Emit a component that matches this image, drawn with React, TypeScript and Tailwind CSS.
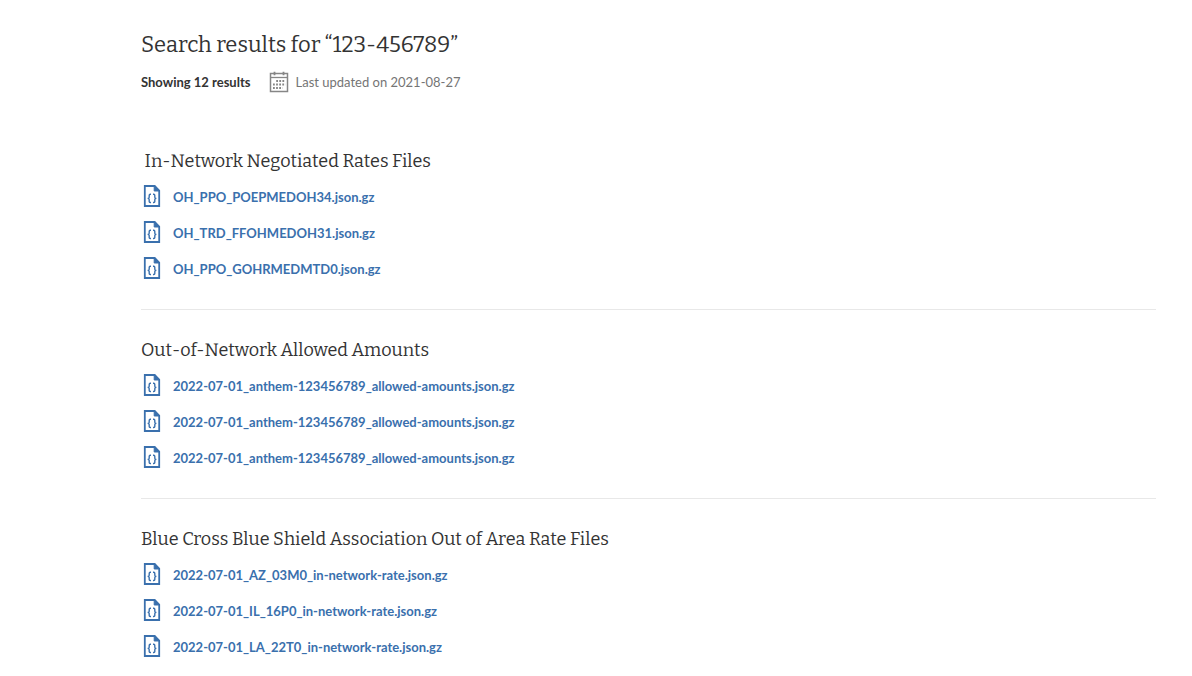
/**
 * Search results page: rate files grouped by category.
 */

interface FileGroup {
  title: string;
  files: string[];
}

const GROUPS: FileGroup[] = [
  {
    title: '\u00a0In-Network Negotiated Rates Files',
    files: [
      'OH_PPO_POEPMEDOH34.json.gz',
      'OH_TRD_FFOHMEDOH31.json.gz',
      'OH_PPO_GOHRMEDMTD0.json.gz',
    ],
  },
  {
    title: 'Out-of-Network Allowed Amounts',
    files: [
      '2022-07-01_anthem-123456789_allowed-amounts.json.gz',
      '2022-07-01_anthem-123456789_allowed-amounts.json.gz',
      '2022-07-01_anthem-123456789_allowed-amounts.json.gz',
    ],
  },
  {
    title: 'Blue Cross Blue Shield Association Out of Area Rate Files',
    files: [
      '2022-07-01_AZ_03M0_in-network-rate.json.gz',
      '2022-07-01_IL_16P0_in-network-rate.json.gz',
      '2022-07-01_LA_22T0_in-network-rate.json.gz',
    ],
  },
];

function CalendarIcon() {
  return (
    <svg width="20" height="22" viewBox="0 0 20 22" fill="none" stroke="#868686" aria-hidden="true">
      <rect x="1.5" y="2.5" width="17" height="18" strokeWidth="1.5" />
      <path d="M1.5 6.5h17" strokeWidth="1.3" />
      <path d="M5.5 0.8v3.4M14.5 0.8v3.4" strokeWidth="1.8" />
      <path d="M7.2 10h9M4 13.5h12.5M4 17h9.5" strokeWidth="1.8" strokeDasharray="1.8 1.3" />
    </svg>
  );
}

function JsonFileIcon() {
  return (
    <svg width="18" height="24" viewBox="0 0 18 24" fill="none" stroke="#3a70ad" aria-hidden="true">
      <path d="M1.8 1h9.9L16.2 5.5V21H1.8z" strokeWidth="1.8" />
      <path d="M11.2 1v5h5z" fill="#3a70ad" strokeWidth="1" />
      <path
        d="M8 9.3H7.3Q6.2 9.3 6.2 10.4V12.2Q6.2 13.4 4.6 13.4Q6.2 13.4 6.2 14.6V16.4Q6.2 17.5 7.3 17.5H8M10 9.3h.7Q11.8 9.3 11.8 10.4V12.2Q11.8 13.4 13.4 13.4Q11.8 13.4 11.8 14.6V16.4Q11.8 17.5 10.7 17.5H10"
        strokeWidth="1.4"
      />
    </svg>
  );
}

function FileSection({ title, files }: FileGroup) {
  return (
    <section className="border-b border-[#e8e8e8] pt-[26px] pb-[22px] last:border-b-0">
      <h2 className="font-['Bitter','DejaVu_Serif_Condensed','DejaVu_Serif',serif] text-[18px] leading-7 text-[#333333]">
        {title}
      </h2>
      <ul className="mt-1">
        {files.map((file, i) => (
          <li key={i} className="flex h-9 items-center">
            <a href="#" className="flex items-center gap-3 pl-0.5 text-[13px] leading-5 font-bold text-[#3a70ad]">
              <JsonFileIcon />
              {file}
            </a>
          </li>
        ))}
      </ul>
    </section>
  );
}

export default function App() {
  return (
    <main className="bg-white pt-[29px] pr-9 pl-[141px] font-['Lato',sans-serif]">
      <h1 className="font-['Bitter','DejaVu_Serif_Condensed','DejaVu_Serif',serif] text-[22px] leading-8 text-[#333333]">
        Search results for “123-456789”
      </h1>
      <div className="mt-[10px] flex items-center text-[13px] leading-[22px]">
        <p className="font-bold text-[#333333]">Showing 12 results</p>
        <p className="ml-[18px] flex items-center gap-[7px] text-[#757575]">
          <CalendarIcon />
          Last updated on 2021-08-27
        </p>
      </div>
      <div className="mt-7">
        {GROUPS.map((group) => (
          <FileSection key={group.title} {...group} />
        ))}
      </div>
    </main>
  );
}
